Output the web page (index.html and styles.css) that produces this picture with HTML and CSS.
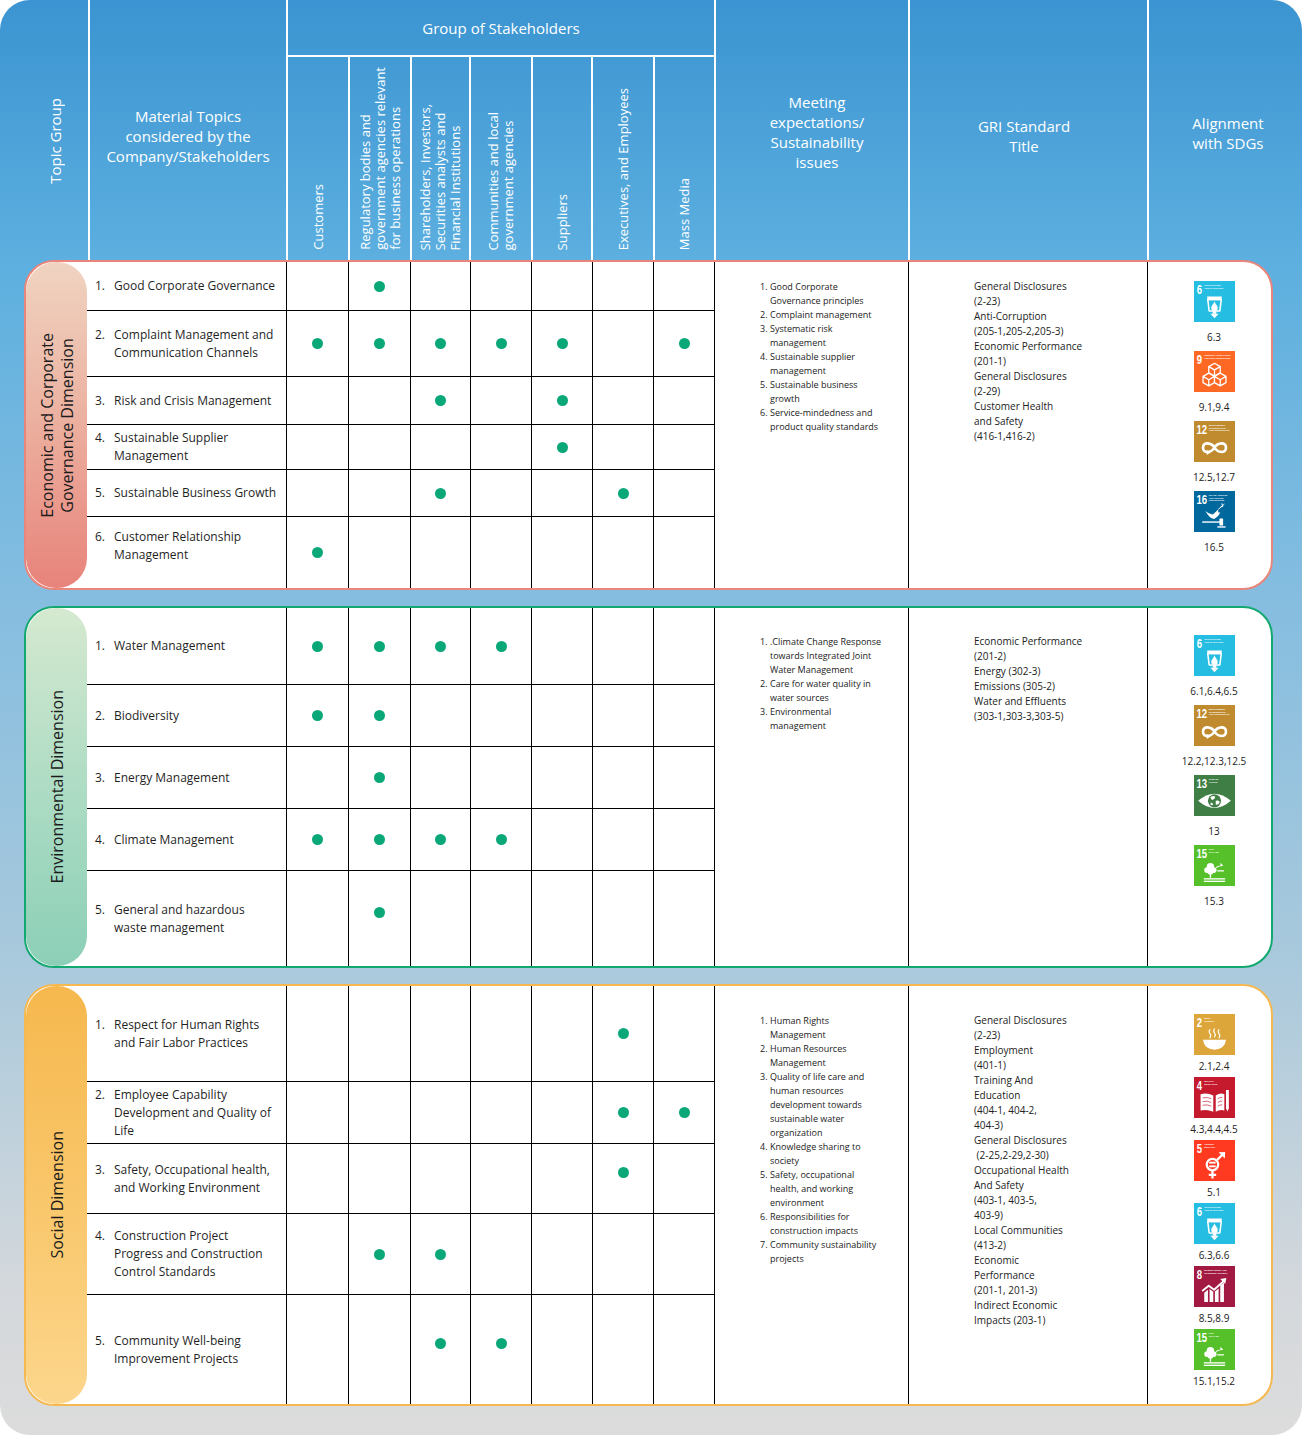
FILE: index.html
```html
<!DOCTYPE html>
<html lang="en">
<head>
<meta charset="utf-8">
<title>Material Topics and Stakeholders</title>
<link rel="stylesheet" href="styles.css">
</head>
<body>
<svg class="sprite" aria-hidden="true">
  <defs>
    <symbol id="p2" viewBox="0 0 100 100">
      <g fill="none" stroke="#fff" stroke-width="2.8" stroke-linecap="round">
        <path d="M39 38 q-4 5 0 10 q4 5 0 10"/><path d="M50 36 q-4 5 0 10 q4 5 0 10"/><path d="M61 38 q-4 5 0 10 q4 5 0 10"/>
      </g>
      <path d="M22 63 H78 Q76 85 50 87 Q24 85 22 63 Z" fill="#fff"/>
    </symbol>
    <symbol id="p4" viewBox="0 0 100 100">
      <path d="M16 42 Q32 37 47 45 V85 Q32 78 16 82 Z M53 45 Q64 37 74 42 V82 Q64 78 53 85 Z" fill="#fff"/>
      <path d="M21 51 Q33 48 42 53 M21 60 Q33 57 42 62 M21 69 Q33 66 42 71 M58 53 Q64 49 69 50 M58 62 Q64 58 69 59 M58 71 Q64 67 69 68" stroke="#c5192d" stroke-width="1.6" fill="none"/>
      <path d="M78 32 h7 v44 l-3.5 8 l-3.5 -8 z" fill="#fff"/>
    </symbol>
    <symbol id="p5" viewBox="0 0 100 100">
      <g stroke="#fff" stroke-width="5.5" fill="none">
        <circle cx="45" cy="60" r="14"/>
        <path d="M56 49 L69 36"/>
        <path d="M45 74 V94 M36 85 H54"/>
      </g>
      <path d="M60 30 L76 29 L75 45 Z" fill="#fff"/>
      <rect x="37" y="53" width="16" height="4.5" fill="#fff"/>
      <rect x="37" y="62" width="16" height="4.5" fill="#fff"/>
    </symbol>
    <symbol id="p6" viewBox="0 0 100 100">
      <path d="M32 38 H68 L67 47 H33 Z" fill="#fff"/>
      <path d="M33.5 45 H66.5 L63 73 H37 Z" fill="none" stroke="#fff" stroke-width="3.8" stroke-linejoin="round"/>
      <path d="M50 50 C47 57 42 61 42 65 A8 8 0 0 0 58 65 C58 61 53 57 50 50 Z" fill="#fff"/>
      <rect x="45.5" y="73" width="9" height="7" fill="#fff"/>
      <path d="M40 80 H60 L50 91 Z" fill="#fff"/>
    </symbol>
    <symbol id="p8" viewBox="0 0 100 100">
      <g fill="#fff">
        <path d="M25 65 L34 58 V88 H25 Z"/>
        <path d="M38 56 L47 63 V88 H38 Z"/>
        <path d="M51 62 L60 55 V88 H51 Z"/>
        <path d="M64 47 L73 40 V88 H64 Z"/>
        <path d="M64 32 L79 29 L76 44 Z"/>
      </g>
      <path d="M20 61 L36 48 L49 58 L72 37" fill="none" stroke="#fff" stroke-width="4.5" stroke-linejoin="round"/>
    </symbol>
    <symbol id="p9" viewBox="0 0 100 100">
      <g fill="#fd6925" stroke="#fff" stroke-width="3.2" stroke-linejoin="round">
        <path d="M50 30 L64 38 L64 53 L50 61 L36 53 L36 38 Z M36 38 L50 46 L64 38 M50 46 V61"/>
        <path d="M36 54 L50 62 L50 77 L36 85 L22 77 L22 62 Z M22 62 L36 70 L50 62 M36 70 V85"/>
        <path d="M64 54 L78 62 L78 77 L64 85 L50 77 L50 62 Z M50 62 L64 70 L78 62 M64 70 V85"/>
      </g>
    </symbol>
    <symbol id="p12" viewBox="0 0 100 100">
      <path d="M50 65 C42 52 22 50 22 65 C22 80 42 78 50 65 C58 52 78 50 78 65 C78 80 58 78 50 65 Z" fill="none" stroke="#fff" stroke-width="6.5"/>
      <path d="M31 71 L41 77 L31 83 Z" fill="#fff"/>
    </symbol>
    <symbol id="p13" viewBox="0 0 100 100">
      <path d="M10 63 Q50 28 90 63 Q50 98 10 63 Z" fill="#fff"/>
      <circle cx="50" cy="63" r="16" fill="#3f7e44"/>
      <path d="M40 54 q7 -5 12 -1 q-1 7 -8 8 q-3 -2 -4 -7 z M53 63 q8 -3 10 3 q-3 8 -10 6 z M41 67 q4 0 6 5 q-3 3 -7 0 z" fill="#fff"/>
    </symbol>
    <symbol id="p15" viewBox="0 0 100 100">
      <g fill="#fff">
        <circle cx="40" cy="53" r="9"/><circle cx="32" cy="61" r="7"/><circle cx="48" cy="61" r="7"/><circle cx="40" cy="65" r="7"/>
        <rect x="38.5" y="66" width="3.2" height="14"/>
        <rect x="24" y="81" width="52" height="3.2"/><rect x="24" y="87" width="52" height="3.2"/>
      </g>
      <path d="M55 54 Q61 51 69 50 M65 46 L69 50 M58 63 H72" stroke="#fff" stroke-width="2.8" fill="none" stroke-linecap="round"/>
    </symbol>
    <symbol id="p16" viewBox="0 0 100 100">
      <path d="M28 49 Q37 58 47 57 L59 45 Q58 55 64 52 Q59 64 49 68 Q37 67 28 49 Z" fill="#fff"/>
      <path d="M59 45 L74 32 M65 39 l6 -2 M69 36 l-1 -6" stroke="#fff" stroke-width="2.4" fill="none"/>
      <g fill="#fff">
        <rect x="20" y="74" width="44" height="3.4"/>
        <rect x="62" y="67" width="9" height="17" rx="1"/>
        <rect x="57" y="86" width="20" height="3.4"/>
      </g>
    </symbol>
  </defs>
</svg>

<div class="panel">
  <header class="head">
    <div class="hc hc-topic"><span class="vt">Topic Group</span></div>
    <div class="hc hc-mat">Material Topics<br>considered by the<br>Company/Stakeholders</div>
    <div class="hc hc-group">
      <div class="group-title">Group of Stakeholders</div>
      <div class="group-cols">
        <div class="sc"><span class="vt">Customers</span></div>
        <div class="sc"><span class="vt">Regulatory bodies and<br>government agencies relevant<br>for business operations</span></div>
        <div class="sc"><span class="vt">Shareholders, Investors,<br>Securities analysts and<br>Financial Institutions</span></div>
        <div class="sc"><span class="vt">Communities and local<br>government agencies</span></div>
        <div class="sc"><span class="vt">Suppliers</span></div>
        <div class="sc"><span class="vt">Executives, and Employees</span></div>
        <div class="sc"><span class="vt">Mass Media</span></div>
      </div>
    </div>
    <div class="hc hc-meet">Meeting<br>expectations/<br>Sustainability<br>issues</div>
    <div class="hc hc-gri">GRI Standard<br>Title</div>
    <div class="hc hc-sdg">Alignment<br>with SDGs</div>
  </header>

  <!-- Economic -->
  <section class="sec sec-eco">
    <div class="pill"><span class="vt">Economic and Corporate<br>Governance Dimension</span></div>
    <div class="rows">
      <div class="row">
        <div class="cell topic"><div class="tp"><span class="n">1.</span><span>Good Corporate Governance</span></div></div>
        <div class="cell"></div><div class="cell"><span class="dot"></span></div><div class="cell"></div><div class="cell"></div><div class="cell"></div><div class="cell"></div><div class="cell"></div>
      </div>
      <div class="row">
        <div class="cell topic"><div class="tp"><span class="n">2.</span><span>Complaint Management and<br>Communication Channels</span></div></div>
        <div class="cell"><span class="dot"></span></div><div class="cell"><span class="dot"></span></div><div class="cell"><span class="dot"></span></div><div class="cell"><span class="dot"></span></div><div class="cell"><span class="dot"></span></div><div class="cell"></div><div class="cell"><span class="dot"></span></div>
      </div>
      <div class="row">
        <div class="cell topic"><div class="tp"><span class="n">3.</span><span>Risk and Crisis Management</span></div></div>
        <div class="cell"></div><div class="cell"></div><div class="cell"><span class="dot"></span></div><div class="cell"></div><div class="cell"><span class="dot"></span></div><div class="cell"></div><div class="cell"></div>
      </div>
      <div class="row">
        <div class="cell topic"><div class="tp"><span class="n">4.</span><span>Sustainable Supplier<br>Management</span></div></div>
        <div class="cell"></div><div class="cell"></div><div class="cell"></div><div class="cell"></div><div class="cell"><span class="dot"></span></div><div class="cell"></div><div class="cell"></div>
      </div>
      <div class="row">
        <div class="cell topic"><div class="tp"><span class="n">5.</span><span>Sustainable Business Growth</span></div></div>
        <div class="cell"></div><div class="cell"></div><div class="cell"><span class="dot"></span></div><div class="cell"></div><div class="cell"></div><div class="cell"><span class="dot"></span></div><div class="cell"></div>
      </div>
      <div class="row">
        <div class="cell topic up"><div class="tp"><span class="n">6.</span><span>Customer Relationship<br>Management</span></div></div>
        <div class="cell"><span class="dot"></span></div><div class="cell"></div><div class="cell"></div><div class="cell"></div><div class="cell"></div><div class="cell"></div><div class="cell"></div>
      </div>
    </div>
    <div class="meet">
      <div class="mi"><span class="n">1.</span><span>Good Corporate<br>Governance principles</span></div>
      <div class="mi"><span class="n">2.</span><span>Complaint management</span></div>
      <div class="mi"><span class="n">3.</span><span>Systematic risk<br>management</span></div>
      <div class="mi"><span class="n">4.</span><span>Sustainable supplier<br>management</span></div>
      <div class="mi"><span class="n">5.</span><span>Sustainable business<br>growth</span></div>
      <div class="mi"><span class="n">6.</span><span>Service-mindedness and<br>product quality standards</span></div>
    </div>
    <div class="gri">General Disclosures<br>(2-23)<br>Anti-Corruption<br>(205-1,205-2,205-3)<br>Economic Performance<br>(201-1)<br>General Disclosures<br>(2-29)<br>Customer Health<br>and Safety<br>(416-1,416-2)</div>
    <div class="sdg">
      <div class="sdg-item">
        <svg class="sdg-icon" viewBox="0 0 100 100"><rect width="100" height="100" fill="#26bde2"/><text class="num" x="7" y="31" textLength="13" lengthAdjust="spacingAndGlyphs">6</text><text class="cap" x="25" y="12">CLEAN WATER</text><text class="cap" x="25" y="18.5">AND SANITATION</text><use href="#p6" width="100" height="100"/></svg>
        <div class="sdg-lbl">6.3</div>
      </div>
      <div class="sdg-item">
        <svg class="sdg-icon" viewBox="0 0 100 100"><rect width="100" height="100" fill="#fd6925"/><text class="num" x="7" y="31" textLength="13" lengthAdjust="spacingAndGlyphs">9</text><text class="cap" x="25" y="12">INDUSTRY, INNOVATION</text><text class="cap" x="25" y="18.5">AND INFRASTRUCTURE</text><use href="#p9" width="100" height="100"/></svg>
        <div class="sdg-lbl">9.1,9.4</div>
      </div>
      <div class="sdg-item">
        <svg class="sdg-icon" viewBox="0 0 100 100"><rect width="100" height="100" fill="#bf8b2e"/><text class="num" x="6" y="31" textLength="26" lengthAdjust="spacingAndGlyphs">12</text><text class="cap" x="36" y="12">RESPONSIBLE</text><text class="cap" x="36" y="18.5">CONSUMPTION</text><text class="cap" x="36" y="25">AND PRODUCTION</text><use href="#p12" width="100" height="100"/></svg>
        <div class="sdg-lbl">12.5,12.7</div>
      </div>
      <div class="sdg-item">
        <svg class="sdg-icon" viewBox="0 0 100 100"><rect width="100" height="100" fill="#00689d"/><text class="num" x="6" y="31" textLength="26" lengthAdjust="spacingAndGlyphs">16</text><text class="cap" x="36" y="12">PEACE, JUSTICE</text><text class="cap" x="36" y="18.5">AND STRONG</text><text class="cap" x="36" y="25">INSTITUTIONS</text><use href="#p16" width="100" height="100"/></svg>
        <div class="sdg-lbl">16.5</div>
      </div>
    </div>
  </section>

  <!-- Environmental -->
  <section class="sec sec-env">
    <div class="pill"><span class="vt">Environmental Dimension</span></div>
    <div class="rows">
      <div class="row">
        <div class="cell topic"><div class="tp"><span class="n">1.</span><span>Water Management</span></div></div>
        <div class="cell"><span class="dot"></span></div><div class="cell"><span class="dot"></span></div><div class="cell"><span class="dot"></span></div><div class="cell"><span class="dot"></span></div><div class="cell"></div><div class="cell"></div><div class="cell"></div>
      </div>
      <div class="row">
        <div class="cell topic"><div class="tp"><span class="n">2.</span><span>Biodiversity</span></div></div>
        <div class="cell"><span class="dot"></span></div><div class="cell"><span class="dot"></span></div><div class="cell"></div><div class="cell"></div><div class="cell"></div><div class="cell"></div><div class="cell"></div>
      </div>
      <div class="row">
        <div class="cell topic"><div class="tp"><span class="n">3.</span><span>Energy Management</span></div></div>
        <div class="cell"></div><div class="cell"><span class="dot"></span></div><div class="cell"></div><div class="cell"></div><div class="cell"></div><div class="cell"></div><div class="cell"></div>
      </div>
      <div class="row">
        <div class="cell topic"><div class="tp"><span class="n">4.</span><span>Climate Management</span></div></div>
        <div class="cell"><span class="dot"></span></div><div class="cell"><span class="dot"></span></div><div class="cell"><span class="dot"></span></div><div class="cell"><span class="dot"></span></div><div class="cell"></div><div class="cell"></div><div class="cell"></div>
      </div>
      <div class="row row-hi">
        <div class="cell topic"><div class="tp"><span class="n">5.</span><span>General and hazardous<br>waste management</span></div></div>
        <div class="cell"></div><div class="cell"><span class="dot"></span></div><div class="cell"></div><div class="cell"></div><div class="cell"></div><div class="cell"></div><div class="cell"></div>
      </div>
    </div>
    <div class="meet">
      <div class="mi"><span class="n">1.</span><span>.Climate Change Response<br>towards Integrated Joint<br>Water Management</span></div>
      <div class="mi"><span class="n">2.</span><span>Care for water quality in<br>water sources</span></div>
      <div class="mi"><span class="n">3.</span><span>Environmental<br>management</span></div>
    </div>
    <div class="gri">Economic Performance<br>(201-2)<br>Energy (302-3)<br>Emissions (305-2)<br>Water and Effluents<br>(303-1,303-3,303-5)</div>
    <div class="sdg">
      <div class="sdg-item">
        <svg class="sdg-icon" viewBox="0 0 100 100"><rect width="100" height="100" fill="#26bde2"/><text class="num" x="7" y="31" textLength="13" lengthAdjust="spacingAndGlyphs">6</text><text class="cap" x="25" y="12">CLEAN WATER</text><text class="cap" x="25" y="18.5">AND SANITATION</text><use href="#p6" width="100" height="100"/></svg>
        <div class="sdg-lbl">6.1,6.4,6.5</div>
      </div>
      <div class="sdg-item">
        <svg class="sdg-icon" viewBox="0 0 100 100"><rect width="100" height="100" fill="#bf8b2e"/><text class="num" x="6" y="31" textLength="26" lengthAdjust="spacingAndGlyphs">12</text><text class="cap" x="36" y="12">RESPONSIBLE</text><text class="cap" x="36" y="18.5">CONSUMPTION</text><text class="cap" x="36" y="25">AND PRODUCTION</text><use href="#p12" width="100" height="100"/></svg>
        <div class="sdg-lbl">12.2,12.3,12.5</div>
      </div>
      <div class="sdg-item">
        <svg class="sdg-icon" viewBox="0 0 100 100"><rect width="100" height="100" fill="#3f7e44"/><text class="num" x="6" y="31" textLength="26" lengthAdjust="spacingAndGlyphs">13</text><text class="cap" x="36" y="12">CLIMATE</text><text class="cap" x="36" y="18.5">ACTION</text><use href="#p13" width="100" height="100"/></svg>
        <div class="sdg-lbl">13</div>
      </div>
      <div class="sdg-item">
        <svg class="sdg-icon" viewBox="0 0 100 100"><rect width="100" height="100" fill="#56c02b"/><text class="num" x="6" y="31" textLength="26" lengthAdjust="spacingAndGlyphs">15</text><text class="cap" x="36" y="12">LIFE</text><text class="cap" x="36" y="18.5">ON LAND</text><use href="#p15" width="100" height="100"/></svg>
        <div class="sdg-lbl">15.3</div>
      </div>
    </div>
  </section>

  <!-- Social -->
  <section class="sec sec-soc">
    <div class="pill"><span class="vt">Social Dimension</span></div>
    <div class="rows">
      <div class="row">
        <div class="cell topic"><div class="tp"><span class="n">1.</span><span>Respect for Human Rights<br>and Fair Labor Practices</span></div></div>
        <div class="cell"></div><div class="cell"></div><div class="cell"></div><div class="cell"></div><div class="cell"></div><div class="cell"><span class="dot"></span></div><div class="cell"></div>
      </div>
      <div class="row">
        <div class="cell topic"><div class="tp"><span class="n">2.</span><span>Employee Capability<br>Development and Quality of<br>Life</span></div></div>
        <div class="cell"></div><div class="cell"></div><div class="cell"></div><div class="cell"></div><div class="cell"></div><div class="cell"><span class="dot"></span></div><div class="cell"><span class="dot"></span></div>
      </div>
      <div class="row row-hi">
        <div class="cell topic"><div class="tp"><span class="n">3.</span><span>Safety, Occupational health,<br>and Working Environment</span></div></div>
        <div class="cell"></div><div class="cell"></div><div class="cell"></div><div class="cell"></div><div class="cell"></div><div class="cell"><span class="dot"></span></div><div class="cell"></div>
      </div>
      <div class="row">
        <div class="cell topic"><div class="tp"><span class="n">4.</span><span>Construction Project<br>Progress and Construction<br>Control Standards</span></div></div>
        <div class="cell"></div><div class="cell"><span class="dot"></span></div><div class="cell"><span class="dot"></span></div><div class="cell"></div><div class="cell"></div><div class="cell"></div><div class="cell"></div>
      </div>
      <div class="row row-hi">
        <div class="cell topic"><div class="tp"><span class="n">5.</span><span>Community Well-being<br>Improvement Projects</span></div></div>
        <div class="cell"></div><div class="cell"></div><div class="cell"><span class="dot"></span></div><div class="cell"><span class="dot"></span></div><div class="cell"></div><div class="cell"></div><div class="cell"></div>
      </div>
    </div>
    <div class="meet">
      <div class="mi"><span class="n">1.</span><span>Human Rights<br>Management</span></div>
      <div class="mi"><span class="n">2.</span><span>Human Resources<br>Management</span></div>
      <div class="mi"><span class="n">3.</span><span>Quality of life care and<br>human resources<br>development towards<br>sustainable water<br>organization</span></div>
      <div class="mi"><span class="n">4.</span><span>Knowledge sharing to<br>society</span></div>
      <div class="mi"><span class="n">5.</span><span>Safety, occupational<br>health, and working<br>environment</span></div>
      <div class="mi"><span class="n">6.</span><span>Responsibilities for<br>construction impacts</span></div>
      <div class="mi"><span class="n">7.</span><span>Community sustainability<br>projects</span></div>
    </div>
    <div class="gri">General Disclosures<br>(2-23)<br>Employment<br>(401-1)<br>Training And<br>Education<br>(404-1, 404-2,<br>404-3)<br>General Disclosures<br>&nbsp;(2-25,2-29,2-30)<br>Occupational Health<br>And Safety<br>(403-1, 403-5,<br>403-9)<br>Local Communities<br>(413-2)<br>Economic<br>Performance<br>(201-1, 201-3)<br>Indirect Economic<br>Impacts (203-1)</div>
    <div class="sdg">
      <div class="sdg-item">
        <svg class="sdg-icon" viewBox="0 0 100 100"><rect width="100" height="100" fill="#dda63a"/><text class="num" x="7" y="31" textLength="13" lengthAdjust="spacingAndGlyphs">2</text><text class="cap" x="25" y="12">ZERO</text><text class="cap" x="25" y="18.5">HUNGER</text><use href="#p2" width="100" height="100"/></svg>
        <div class="sdg-lbl">2.1,2.4</div>
      </div>
      <div class="sdg-item">
        <svg class="sdg-icon" viewBox="0 0 100 100"><rect width="100" height="100" fill="#c5192d"/><text class="num" x="7" y="31" textLength="13" lengthAdjust="spacingAndGlyphs">4</text><text class="cap" x="25" y="12">QUALITY</text><text class="cap" x="25" y="18.5">EDUCATION</text><use href="#p4" width="100" height="100"/></svg>
        <div class="sdg-lbl">4.3,4.4,4.5</div>
      </div>
      <div class="sdg-item">
        <svg class="sdg-icon" viewBox="0 0 100 100"><rect width="100" height="100" fill="#ff3a21"/><text class="num" x="7" y="31" textLength="13" lengthAdjust="spacingAndGlyphs">5</text><text class="cap" x="25" y="12">GENDER</text><text class="cap" x="25" y="18.5">EQUALITY</text><use href="#p5" width="100" height="100"/></svg>
        <div class="sdg-lbl">5.1</div>
      </div>
      <div class="sdg-item">
        <svg class="sdg-icon" viewBox="0 0 100 100"><rect width="100" height="100" fill="#26bde2"/><text class="num" x="7" y="31" textLength="13" lengthAdjust="spacingAndGlyphs">6</text><text class="cap" x="25" y="12">CLEAN WATER</text><text class="cap" x="25" y="18.5">AND SANITATION</text><use href="#p6" width="100" height="100"/></svg>
        <div class="sdg-lbl">6.3,6.6</div>
      </div>
      <div class="sdg-item">
        <svg class="sdg-icon" viewBox="0 0 100 100"><rect width="100" height="100" fill="#a21942"/><text class="num" x="7" y="31" textLength="13" lengthAdjust="spacingAndGlyphs">8</text><text class="cap" x="25" y="12">DECENT WORK AND</text><text class="cap" x="25" y="18.5">ECONOMIC GROWTH</text><use href="#p8" width="100" height="100"/></svg>
        <div class="sdg-lbl">8.5,8.9</div>
      </div>
      <div class="sdg-item">
        <svg class="sdg-icon" viewBox="0 0 100 100"><rect width="100" height="100" fill="#56c02b"/><text class="num" x="6" y="31" textLength="26" lengthAdjust="spacingAndGlyphs">15</text><text class="cap" x="36" y="12">LIFE</text><text class="cap" x="36" y="18.5">ON LAND</text><use href="#p15" width="100" height="100"/></svg>
        <div class="sdg-lbl">15.1,15.2</div>
      </div>
    </div>
  </section>
</div>
</body>
</html>
```

FILE: styles.css
```css
* { box-sizing: border-box; }

html, body {
  margin: 0;
  padding: 0;
  background: #ffffff;
}

body {
  font-family: "Open Sans", "Noto Sans", "DejaVu Sans", sans-serif;
  color: #1f1f1f;
}

.sprite {
  position: absolute;
  width: 0;
  height: 0;
  overflow: hidden;
}

.panel {
  width: 1302px;
  height: 1435px;
  border-radius: 30px;
  overflow: hidden;
  background: linear-gradient(180deg, #3b94d1 0%, #5cafdf 18%, #84bde0 41%, #a9c9dc 67%, #d4d8dc 90%, #dcdcdc 100%);
  display: flex;
  flex-direction: column;
}

/* ---------- header ---------- */
.head {
  display: grid;
  grid-template-columns: 90px 198px 428px 194px 239px 153px;
  height: 260px;
  flex: none;
  color: #ffffff;
  font-size: 15px;
  line-height: 20px;
}

.hc {
  border-right: 2px solid #ffffff;
  display: flex;
  align-items: center;
  justify-content: center;
  text-align: center;
}

.hc-topic { padding: 22px 0 0 22px; }
.hc-mat { padding-top: 12px; }
.hc-meet { padding: 4px 0 0 10px; }
.hc-gri { padding: 12px 9px 0 0; }
.hc-sdg { padding: 6px 0 0 5px; border-right: 0; }

.vt {
  writing-mode: vertical-rl;
  transform: rotate(180deg);
  white-space: nowrap;
}

.hc-group {
  flex-direction: column;
  align-items: stretch;
  justify-content: flex-start;
}

.group-title {
  height: 57px;
  flex: none;
  border-bottom: 2px solid #ffffff;
  display: flex;
  align-items: center;
  justify-content: center;
}

.group-cols {
  flex: 1;
  display: grid;
  grid-template-columns: 62px 62px 59px 62px 60px 62px 59px;
}

.sc {
  border-right: 2px solid #ffffff;
  display: flex;
  align-items: flex-end;
  justify-content: center;
  padding-bottom: 10px;
}

.sc:last-child { border-right: 0; }

.sc .vt {
  font-size: 13px;
  line-height: 15px;
  text-align: start;
}

/* ---------- sections ---------- */
.sec {
  flex: none;
  margin: 0 29px 16px 24px;
  border: 2px solid #000;
  border-radius: 30px;
  background: #ffffff;
  display: grid;
  grid-template-columns: 61px 628px 194px 239px 1fr;
  overflow: hidden;
}

.sec-eco { height: 330px; border-color: #e9857a; }
.sec-env { height: 362px; border-color: #13a86f; }
.sec-soc { height: 422px; border-color: #f6b951; margin-bottom: 0; }

.pill {
  border-radius: 30px;
  display: flex;
  align-items: center;
  justify-content: center;
}

.pill .vt {
  font-size: 16px;
  line-height: 20px;
  text-align: center;
  color: #1b1b1b;
}

.sec-eco .pill { background: linear-gradient(180deg, #f0d3c1 0%, #ecb3a2 45%, #e8837a 100%); }
.sec-env .pill { background: linear-gradient(180deg, #d5e9d0 0%, #aedcc4 50%, #8ccfb7 100%); }
.sec-soc .pill { background: linear-gradient(180deg, #f6b84e 0%, #f9c66a 50%, #fcd68c 100%); }

.rows { display: grid; }
.sec-eco .rows { grid-template-rows: 49px 66px 48px 45px 47px 71px; }
.sec-env .rows { grid-template-rows: 77px 62px 62px 62px 95px; }
.sec-soc .rows { grid-template-rows: 96px 62px 70px 81px 109px; }

.row {
  display: grid;
  grid-template-columns: 200px 62px 62px 60px 61px 61px 61px 61px;
  border-bottom: 1px solid #000;
}

.row:last-child { border-bottom: 0; }

.cell {
  border-right: 1px solid #000;
  display: flex;
  align-items: center;
  justify-content: center;
}

.row-hi .cell { padding-bottom: 12px; }
.row-hi .topic { padding-bottom: 0; }

.topic {
  justify-content: flex-start;
  padding-left: 8px;
  font-size: 12px;
  line-height: 18px;
  color: #1f1f1f;
  white-space: nowrap;
}

.topic.up { padding-bottom: 14px; }

.tp {
  display: flex;
  align-items: flex-start;
}

.tp .n {
  width: 19px;
  flex: none;
}

.dot {
  width: 11px;
  height: 11px;
  border-radius: 50%;
  background: #0aa778;
}

.meet {
  border-right: 1px solid #000;
  padding: 18px 0 0 45px;
  font-size: 9px;
  line-height: 14px;
  color: #222;
  white-space: nowrap;
}

.sec-env .meet { padding-top: 27px; }
.sec-soc .meet { padding-top: 28px; }

.mi { display: flex; }
.mi .n { width: 10px; flex: none; }

.gri {
  border-right: 1px solid #000;
  padding: 17px 0 0 65px;
  font-size: 10px;
  line-height: 15px;
  color: #222;
  white-space: nowrap;
}

.sec-env .gri { padding-top: 26px; }
.sec-soc .gri { padding-top: 27px; }

.sdg {
  display: flex;
  flex-direction: column;
  align-items: center;
  padding: 19px 0 0 9px;
  font-size: 10px;
  line-height: 14px;
  color: #222;
}

.sec-env .sdg { padding-top: 27px; }
.sec-soc .sdg { padding-top: 28px; }

.sdg-item {
  display: flex;
  flex-direction: column;
  align-items: center;
}

.sdg-icon {
  width: 41px;
  height: 41px;
  display: block;
}

.sdg-lbl {
  margin: 8px 0 7px;
  white-space: nowrap;
}

.sec-soc .sdg-lbl { margin: 4px 0 4px; }

.sdg-icon .num {
  font-family: "Liberation Sans", "DejaVu Sans", sans-serif;
  font-weight: 700;
  font-size: 31px;
  fill: #ffffff;
}

.sdg-icon .cap {
  font-family: "Liberation Sans", "DejaVu Sans", sans-serif;
  font-weight: 700;
  font-size: 5.5px;
  fill: #ffffff;
}
```
